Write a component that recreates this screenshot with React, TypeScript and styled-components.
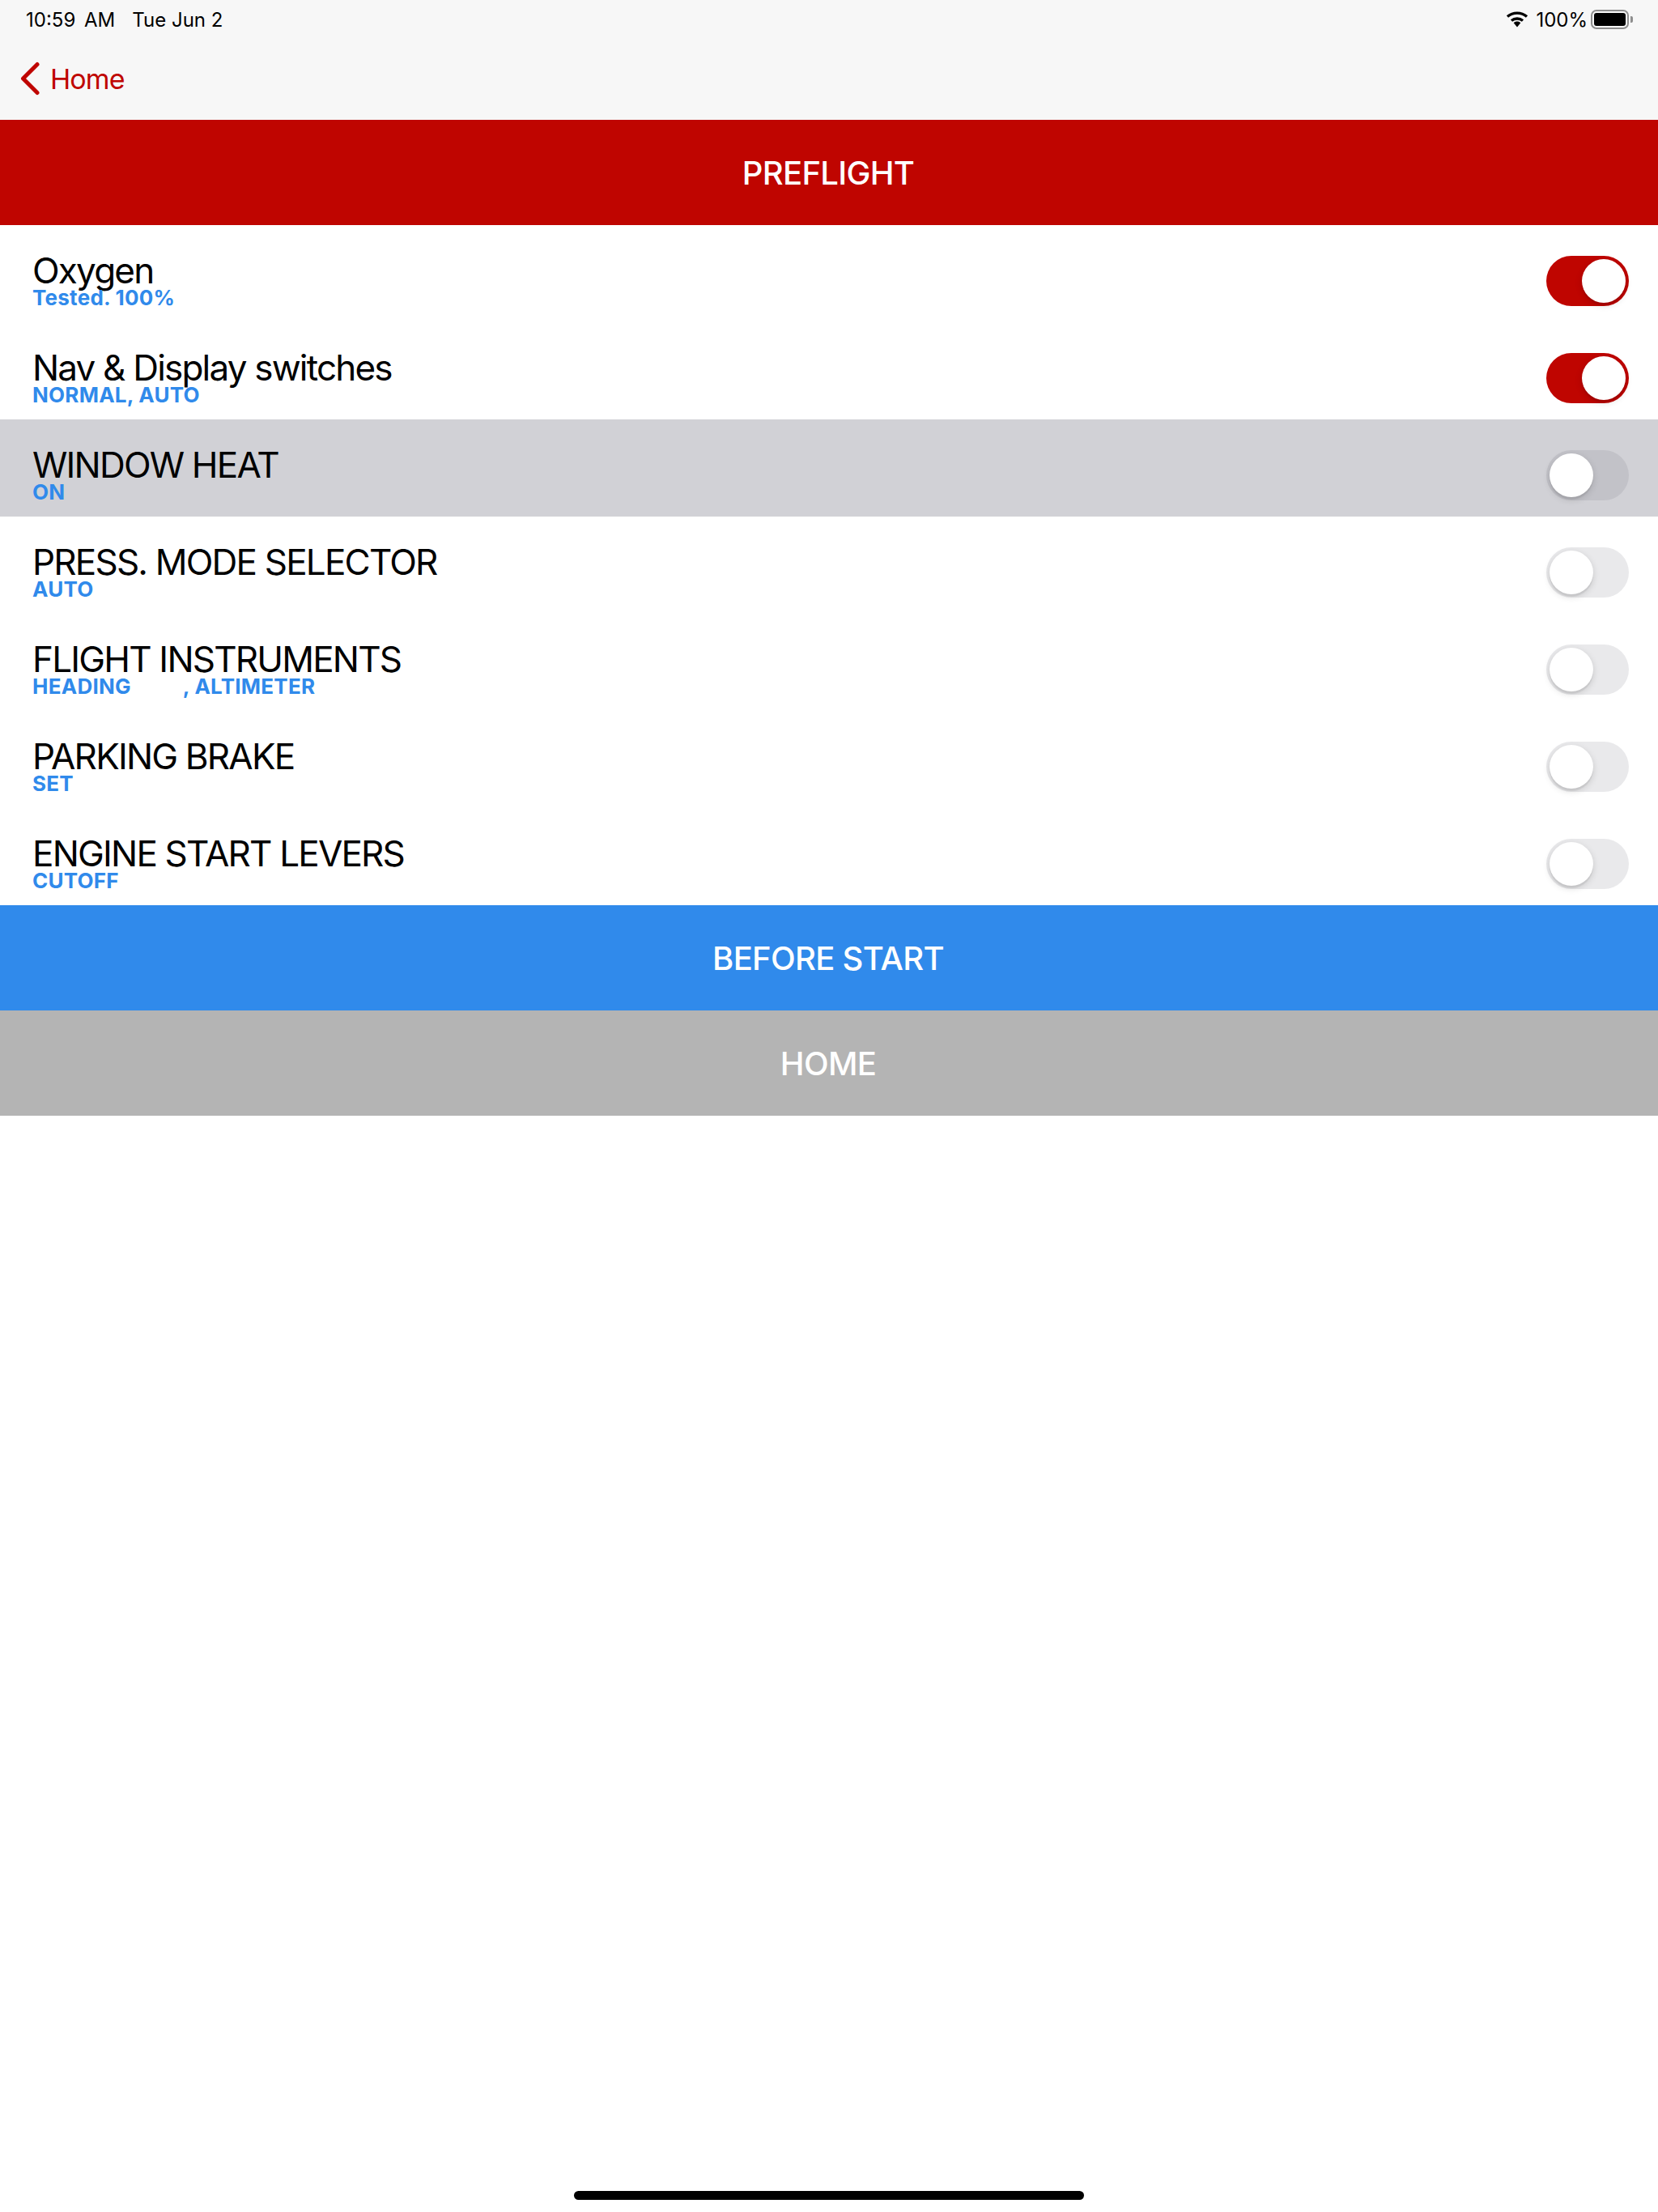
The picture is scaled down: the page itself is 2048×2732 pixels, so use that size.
import React from 'react';
import styled, { createGlobalStyle } from 'styled-components';

const GlobalStyle = createGlobalStyle`
  html, body {
    margin: 0;
    padding: 0;
    background: #ffffff;
    font-family: Inter, "Liberation Sans", sans-serif;
  }
`;

const Page = styled.div`
  display: flex;
  flex-direction: column;
  width: 2048px;
  height: 2732px;
  overflow: hidden;
  background: #ffffff;
`;

const NavArea = styled.header`
  height: 148px;
  box-sizing: border-box;
  background: #f7f7f7;
`;

const StatusBar = styled.div`
  display: flex;
  justify-content: space-between;
  align-items: center;
  height: 48px;
  padding: 0 31px 0 32px;
  font-size: 24px;
  color: #000000;
`;

const StatusLeft = styled.div`
  display: flex;
  gap: 21px;
`;

const StatusTime = styled.span`
  word-spacing: 4px;
`;

const StatusRight = styled.div`
  display: flex;
  align-items: center;
  gap: 9px;
`;

const Battery = styled.div`
  display: flex;
  align-items: center;
  gap: 2px;
  margin-left: -5px;
`;

const BatteryBody = styled.div`
  box-sizing: border-box;
  width: 47px;
  height: 24px;
  padding: 2px;
  border: 2px solid #8e8e8e;
  border-radius: 7px;
`;

const BatteryFill = styled.div`
  width: 100%;
  height: 100%;
  background: #000000;
  border-radius: 3px;
`;

const BatteryCap = styled.div`
  width: 3px;
  height: 8px;
  background: #8e8e8e;
  border-radius: 0 2px 2px 0;
`;

const BackLink = styled.a`
  display: flex;
  align-items: center;
  gap: 13px;
  height: 100px;
  padding-left: 25px;
  box-sizing: border-box;
  padding-bottom: 2px;
  font-size: 34px;
  letter-spacing: -0.9px;
  color: #bf0500;
`;

const Banner = styled.div<{ $bg: string }>`
  display: flex;
  align-items: center;
  justify-content: center;
  box-sizing: border-box;
  height: 130px;
  padding-right: 2px;
  background: ${({ $bg }) => $bg};
  color: #ffffff;
  font-size: 40px;
  font-weight: 500;
  letter-spacing: -0.7px;
`;

const Row = styled.div<{ $active?: boolean }>`
  display: flex;
  justify-content: space-between;
  align-items: flex-start;
  box-sizing: border-box;
  height: 120px;
  padding: 38px 36px 0 40px;
  background: ${({ $active }) => ($active ? '#d1d1d6' : '#ffffff')};
`;

const RowText = styled.div`
  display: flex;
  flex-direction: column;
  margin-top: -7px;
`;

const RowTitle = styled.div`
  font-size: 44px;
  font-weight: 380;
  line-height: 50px;
  letter-spacing: -1.8px;
  color: #000000;
`;

const RowSub = styled.div`
  margin-top: -7px;
  font-size: 26px;
  line-height: 32px;
  font-weight: 650;
  letter-spacing: 0.25px;
  color: #308aeb;
  white-space: pre;
`;

const Track = styled.div<{ $on: boolean }>`
  display: flex;
  justify-content: ${({ $on }) => ($on ? 'flex-end' : 'flex-start')};
  align-items: center;
  box-sizing: border-box;
  width: 102px;
  height: 62px;
  padding: 0 4px;
  border-radius: 31px;
  background: ${({ $on }) => ($on ? '#bf0500' : 'rgba(120, 120, 128, 0.16)')};
`;

const Knob = styled.div`
  width: 54px;
  height: 54px;
  border-radius: 50%;
  background: #ffffff;
  box-shadow: 0 3px 8px rgba(0, 0, 0, 0.15), 0 3px 1px rgba(0, 0, 0, 0.06);
`;

const Spacer = styled.div`
  flex: 1;
`;

const HomeBar = styled.div`
  align-self: center;
  width: 630px;
  height: 11px;
  margin-bottom: 15px;
  border-radius: 6px;
  background: #000000;
`;

const WifiIcon = () => (
  <svg width="28" height="20" viewBox="0 0 28 20" fill="none">
    <path d="M2 6.500C8.800.6 19.200.6 26 6.500" stroke="#000" strokeWidth="3.4" />
    <path d="M7 11.500c4-3.400 10-3.400 14 0" stroke="#000" strokeWidth="3.4" />
    <path d="M14 12.600c-1.700 0-3.200.6-4.300 1.600L14 19.500l4.300-5.300c-1.100-1-2.600-1.600-4.300-1.600z" fill="#000" />
  </svg>
);

const BackChevron = () => (
  <svg width="24" height="42" viewBox="0 0 24 42" fill="none">
    <path d="M21 3.500 3.500 21 21 38.500" stroke="#bf0500" strokeWidth="5" strokeLinecap="round" strokeLinejoin="round" />
  </svg>
);

const items = [
  { title: 'Oxygen', sub: 'Tested. 100%', on: true },
  { title: 'Nav & Display switches', sub: 'NORMAL, AUTO', on: true },
  { title: 'WINDOW HEAT', sub: 'ON', on: false, active: true },
  { title: 'PRESS. MODE SELECTOR', sub: 'AUTO', on: false },
  { title: 'FLIGHT INSTRUMENTS', sub: 'HEADING          , ALTIMETER', on: false },
  { title: 'PARKING BRAKE', sub: 'SET', on: false },
  { title: 'ENGINE START LEVERS', sub: 'CUTOFF', on: false },
];

const App = () => {
  return (
    <Page>
      <GlobalStyle />
      <NavArea>
        <StatusBar>
          <StatusLeft>
            <StatusTime>10:59 AM</StatusTime>
            <span>Tue Jun 2</span>
          </StatusLeft>
          <StatusRight>
            <WifiIcon />
            <span>100%</span>
            <Battery>
              <BatteryBody>
                <BatteryFill />
              </BatteryBody>
              <BatteryCap />
            </Battery>
          </StatusRight>
        </StatusBar>
        <BackLink>
          <BackChevron />
          Home
        </BackLink>
      </NavArea>
      <Banner $bg="#bf0500">PREFLIGHT</Banner>
      {items.map((item) => (
        <Row key={item.title} $active={item.active}>
          <RowText>
            <RowTitle>{item.title}</RowTitle>
            <RowSub>{item.sub}</RowSub>
          </RowText>
          <Track $on={item.on}>
            <Knob />
          </Track>
        </Row>
      ))}
      <Banner $bg="#308aeb">BEFORE START</Banner>
      <Banner $bg="#b4b4b4">HOME</Banner>
      <Spacer />
      <HomeBar />
    </Page>
  );
};

export default App;
